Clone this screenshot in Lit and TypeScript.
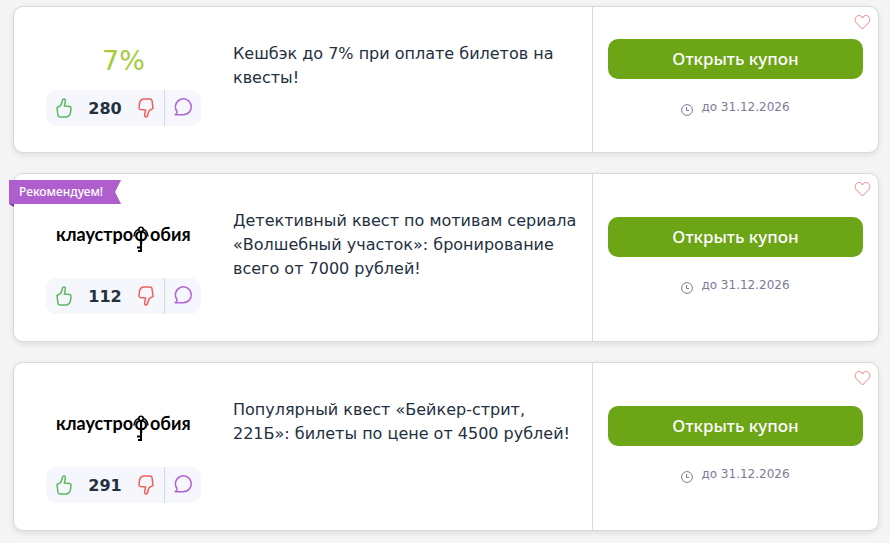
import { LitElement, html, svg, css } from "lit";
import { customElement, property } from "lit/decorators.js";

interface Coupon {
  logo: "percent" | "claustro";
  title: string;
  votes: number;
  until: string;
  featured?: boolean;
}

const coupons: Coupon[] = [
  { logo: "percent", title: "Кешбэк до 7% при оплате билетов на квесты!", votes: 280, until: "31.12.2026" },
  {
    logo: "claustro",
    title: "Детективный квест по мотивам сериала «Волшебный участок»: бронирование всего от 7000 рублей!",
    votes: 112,
    until: "31.12.2026",
    featured: true,
  },
  { logo: "claustro", title: "Популярный квест «Бейкер-стрит, 221Б»: билеты по цене от 4500 рублей!", votes: 291, until: "31.12.2026" },
];

const thumb = svg`<path d="M1 9.5 L4.6 7.6 Q6.2 4.6 6.5 2.2 Q6.9 .8 8.2 1 Q9.7 1.5 9.3 3.4 L8.4 8 L13.6 8.4 Q15.2 8.7 15 10.4 L14.4 15.2 Q13.6 18.6 10.6 19 L4 19 Q2 18.8 1.9 17 Z"/>`;

@customElement("coupon-card")
export class CouponCard extends LitElement {
  @property({ attribute: false }) coupon!: Coupon;

  static styles = css`
    :host { display: block; }
    * { box-sizing: border-box; }
    button { font: inherit; border: 0; padding: 0; background: none; cursor: pointer; }
    svg { display: block; fill: none; }
    .card {
      position: relative;
      display: flex;
      background: #fff;
      border: 1px solid #d9d9da;
      border-radius: 10px;
      box-shadow: 0 2px 6px rgba(0, 0, 0, 0.1);
    }
    .info { flex: 1; display: flex; gap: 32px; padding: 35px 15px 26px 32px; min-width: 0; }
    .brand { flex: none; width: 155px; display: flex; flex-direction: column; align-items: center; }
    .brand.tall { min-height: 106px; }
    .percent { height: 48px; line-height: 38px; font-size: 27px; color: #a5cd39; }
    .logo { height: 69px; padding-top: 10px; }
    .word { fill: #000; font: 700 18px "Lato", sans-serif; }
    .votes { display: flex; align-items: center; width: 100%; height: 36px; background: #f6f7fc; border-radius: 10px; }
    .vote { width: 36px; height: 36px; display: grid; place-items: center; }
    .up { stroke: #5cb860; }
    .down { stroke: #ee5f5b; }
    .chat { stroke: #b065d6; }
    .turned { transform: rotate(180deg); }
    .count { flex: 1; text-align: center; font-size: 16px; font-weight: 700; color: #23303f; }
    .talk { height: 36px; width: 37px; padding-bottom: 3px; border-left: 1px solid #d5d9e6; display: grid; place-items: center; }
    .title { margin: 0; flex: 1; font-size: 16px; line-height: 24px; font-weight: 400; color: #23303f; }
    .action {
      flex: none;
      width: 286px;
      padding: 0 15px;
      border-left: 1px solid #d9d9da;
      display: flex;
      flex-direction: column;
      justify-content: center;
      gap: 18px;
    }
    .action .open {
      height: 40px;
      padding-bottom: 2px;
      border-radius: 10px;
      background: #6ca516;
      color: #fff;
      font: 500 17px "Noto Sans", sans-serif;
    }
    .until { display: flex; justify-content: center; gap: 8px; height: 23px; line-height: 20px; font-size: 12px; color: #7d7a96; }
    .clock { stroke: #7d7a96; margin-top: 7px; }
    .fav { position: absolute; top: 7px; right: 7px; }
    .heart { stroke: #ee8580; }
    .ribbon { position: absolute; left: -5px; top: 6px; }
    .label {
      display: block;
      height: 24px;
      padding: 0 18px 0 10px;
      background: #ae5fcd;
      color: #fff;
      font: 500 12px/23px "Noto Sans", sans-serif;
      clip-path: polygon(0 0, 100% 0, calc(100% - 6px) 50%, 100% 100%, 0 100%);
    }
    .fold { width: 5px; height: 3px; background: #752f95; clip-path: polygon(0 0, 100% 0, 100% 100%); }
  `;

  private brand() {
    if (this.coupon.logo === "percent") return html`<div class="percent">7%</div>`;
    return html`<div class="logo">
      <svg width="136" height="34" viewBox="0 0 136 34" role="img" aria-label="клаустрофобия">
        <text class="word" y="22"><tspan x="0">клаустро</tspan><tspan x="85" text-anchor="middle" font-family="Lato">ф</tspan><tspan x="94" text-anchor="start">обия</tspan></text>
        <path d="M85 12V33M85 28.5h-4M85 32h-3" stroke="#000" stroke-width="2" />
        <path d="M78 17.5a4 4.5 0 0 1 14 0" stroke="#000" stroke-width="1.5" />
        <circle cx="85" cy="10.5" r="2.2" stroke="#000" stroke-width="1.6" fill="#fff" />
      </svg>
    </div>`;
  }

  render() {
    const c = this.coupon;
    return html`<article class="card">
      ${c.featured ? html`<div class="ribbon"><span class="label">Рекомендуем!</span><div class="fold"></div></div>` : null}
      <div class="info">
        <div class="brand ${c.logo === "claustro" ? "tall" : ""}">
          ${this.brand()}
          <div class="votes">
            <button class="vote" aria-label="Нравится"><svg class="up" width="16" height="20" viewBox="0 0 16 20" stroke-width="1.5" stroke-linejoin="round">${thumb}</svg></button>
            <span class="count">${c.votes}</span>
            <button class="vote" aria-label="Не нравится"><svg class="down turned" width="16" height="20" viewBox="0 0 16 20" stroke-width="1.5" stroke-linejoin="round">${thumb}</svg></button>
            <button class="talk" aria-label="Комментарии">
              <svg class="chat" width="18" height="18" viewBox="0 0 18 18" stroke-width="1.5" stroke-linejoin="round">
                <path d="M3.2 13.8A7.9 7.9 0 1 1 9.3 16.7H1.2Q3.2 15.8 3.2 13.8" />
              </svg>
            </button>
          </div>
        </div>
        <h2 class="title">${c.title}</h2>
      </div>
      <div class="action">
        <button class="open">Открыть купон</button>
        <div class="until">
          <svg class="clock" width="12" height="12" viewBox="0 0 12 12"><circle cx="6" cy="6" r="5.4" /><path d="M5.5 3v3.5H8" /></svg>
          <span>до ${c.until}</span>
        </div>
      </div>
      <button class="fav" aria-label="В избранное">
        <svg class="heart" width="17" height="16" viewBox="0 0 17 16"><path d="M8.5 15L2.4 8.8C.2 6.3 1.2 2 4.6 1.5 6.4 1.3 7.8 2.4 8.5 4 9.2 2.4 10.6 1.3 12.4 1.5 15.8 2 16.8 6.3 14.6 8.8Z" /></svg>
      </button>
    </article>`;
  }
}

@customElement("app-root")
export class AppRoot extends LitElement {
  static styles = css`
    :host {
      display: block;
      min-height: 100vh;
      box-sizing: border-box;
      padding: 6px 11px 13px 13px;
      background: #f5f5f5;
      font-family: "DejaVu Sans", sans-serif;
    }
    .list { display: flex; flex-direction: column; gap: 20px; }
  `;

  render() {
    return html`<main class="list">${coupons.map((c) => html`<coupon-card .coupon=${c}></coupon-card>`)}</main>`;
  }
}
